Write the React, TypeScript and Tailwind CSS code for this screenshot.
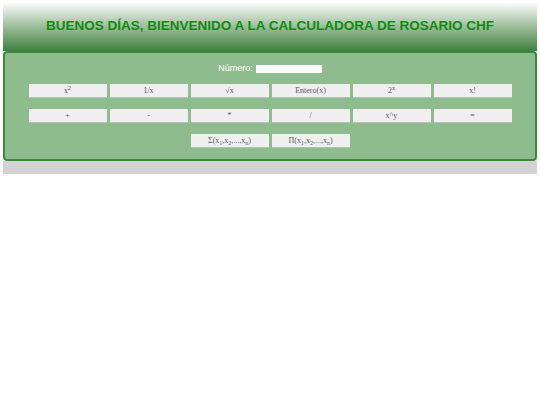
import React from "react";

const Btn = ({ children }: { children: React.ReactNode }) => (
  <button className="w-[78px] h-[14px] bg-[#efefef] border-b border-[#b5c2b5] text-[#5a5a5a] text-[8px] leading-[13px] flex items-center justify-center [font-family:'Liberation_Serif',serif]">
    <span>{children}</span>
  </button>
);

export default function App() {
  return (
    <div className="min-h-screen bg-white pt-[2px] px-[3px] [font-family:'Liberation_Sans',Arial,sans-serif]">
      <div className="h-[49px] bg-gradient-to-b from-white to-[#3d7f3d] flex items-center justify-center">
        <h1 className="text-[13.5px] font-bold text-[#128a12]">
          BUENOS DÍAS, BIENVENIDO A LA CALCULADORA DE ROSARIO CHF
        </h1>
      </div>
      <div className="h-[110px] border-2 border-[#3a8a3a] rounded-[4px] bg-[#8fbc8f] pt-[10px] flex flex-col items-center">
        <div className="h-[12px] flex items-center gap-[3px]">
          <span className="text-white text-[9px]">Número:</span>
          <input className="w-[66px] h-[8px] bg-white border-0 outline-none" />
        </div>
        <div className="mt-[9px] flex flex-col gap-[11px] items-center">
          <div className="flex gap-[3px]">
            <Btn>x<sup className="text-[6px]">2</sup></Btn>
            <Btn>1/x</Btn>
            <Btn>√x</Btn>
            <Btn>Entero(x)</Btn>
            <Btn>2<sup className="text-[6px]">x</sup></Btn>
            <Btn>x!</Btn>
          </div>
          <div className="flex gap-[3px]">
            <Btn>+</Btn>
            <Btn>-</Btn>
            <Btn>*</Btn>
            <Btn>/</Btn>
            <Btn>x^y</Btn>
            <Btn>=</Btn>
          </div>
          <div className="flex gap-[3px]">
            <Btn>Σ(x<sub className="text-[6px]">1</sub>,x<sub className="text-[6px]">2</sub>,...,x<sub className="text-[6px]">n</sub>)</Btn>
            <Btn>Π(x<sub className="text-[6px]">1</sub>,x<sub className="text-[6px]">2</sub>,...,x<sub className="text-[6px]">n</sub>)</Btn>
          </div>
        </div>
      </div>
      <div className="h-[13px] bg-[#d3d3d3]" />
    </div>
  );
}
